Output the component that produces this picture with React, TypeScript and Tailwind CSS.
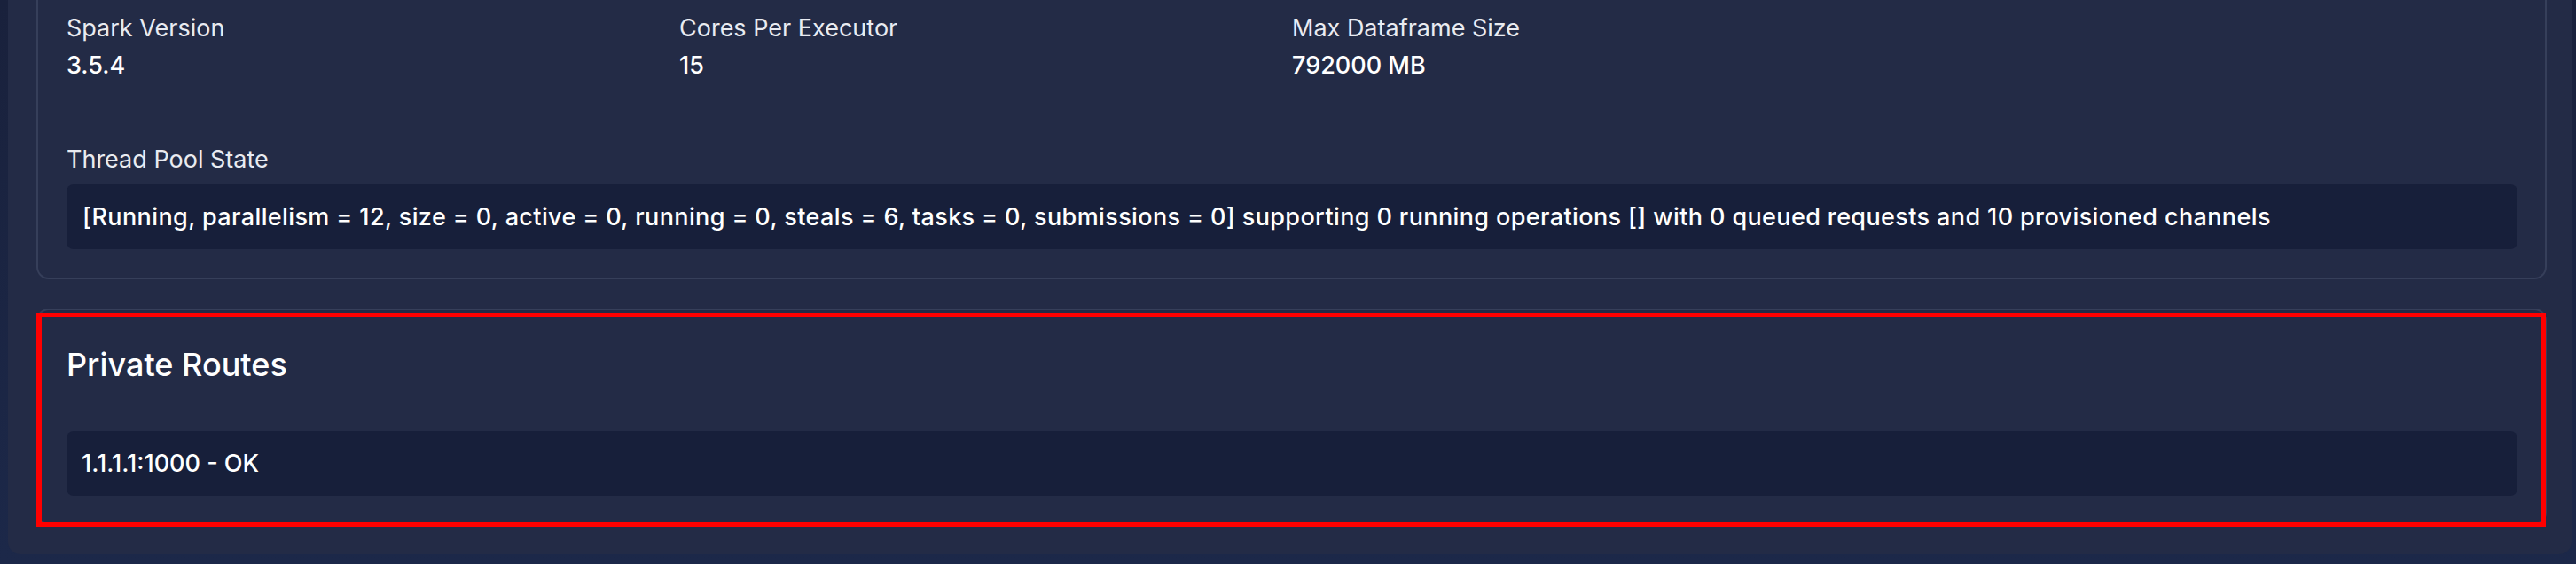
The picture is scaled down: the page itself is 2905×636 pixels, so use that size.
const stats = [
  { label: "Spark Version", value: "3.5.4" },
  { label: "Cores Per Executor", value: "15" },
  { label: "Max Dataframe Size", value: "792000 MB" },
];

const threadPool =
  "[Running, parallelism = 12, size = 0, active = 0, running = 0, steals = 6, tasks = 0, submissions = 0] supporting 0 running operations [] with 0 queued requests and 10 provisioned channels";

const routes = ["1.1.1.1:1000 - OK"];

export default function App() {
  return (
    <div
      className="w-full h-[636px] overflow-hidden bg-gradient-to-b from-[#19213c] to-[#1c2849] pl-[9px] pr-[5px] pb-[11px] text-[#eef0f5]"
      style={{ fontFamily: "Inter, 'Noto Sans', sans-serif" }}
    >
      <div className="h-full rounded-b-[14px] bg-[#232b46] pl-[32px] pr-[28px] flex flex-col gap-[33px]">
        {/* Executor details card (top cut off) */}
        <section className="rounded-b-[14px] border-2 border-t-0 border-[#363f5a] pl-[32px] pr-[31px] pt-[11px] pb-[32px]">
          <div className="grid grid-cols-4">
            {stats.map((s) => (
              <div key={s.label} className="flex flex-col">
                <span className="text-[27px] leading-[42px] font-normal text-[#e9ebf1]">{s.label}</span>
                <span className="text-[27px] leading-[42px] font-medium text-white">{s.value}</span>
              </div>
            ))}
          </div>

          <div className="mt-[64px] flex flex-col gap-[7px]">
            <span className="text-[27px] leading-[42px] font-normal text-[#e9ebf1]">Thread Pool State</span>
            <div className="rounded-[8px] bg-[#171f3a] px-[18px] py-[16px] text-[27px] leading-[41px] tracking-[0.38px] font-medium text-white whitespace-nowrap">
              {threadPool}
            </div>
          </div>
        </section>

        {/* Private routes card */}
        <section className="relative rounded-[14px] border-2 border-[#363f5a] pl-[32px] pr-[31px] pt-[39px] pb-[31px]">
          <h2 className="text-[36px] leading-[44px] font-medium text-white">Private Routes</h2>
          <div className="mt-[53px] flex flex-col gap-3">
            {routes.map((r) => (
              <div
                key={r}
                className="rounded-[8px] bg-[#171f3a] px-[17px] py-[16px] text-[27px] leading-[41px] font-medium text-white"
              >
                {r}
              </div>
            ))}
          </div>
          <div className="pointer-events-none absolute -left-[2px] top-[3px] -right-[1px] -bottom-[4px] border-[5px] border-l-[6px] border-[#ff0000]" />
        </section>
      </div>
    </div>
  );
}
